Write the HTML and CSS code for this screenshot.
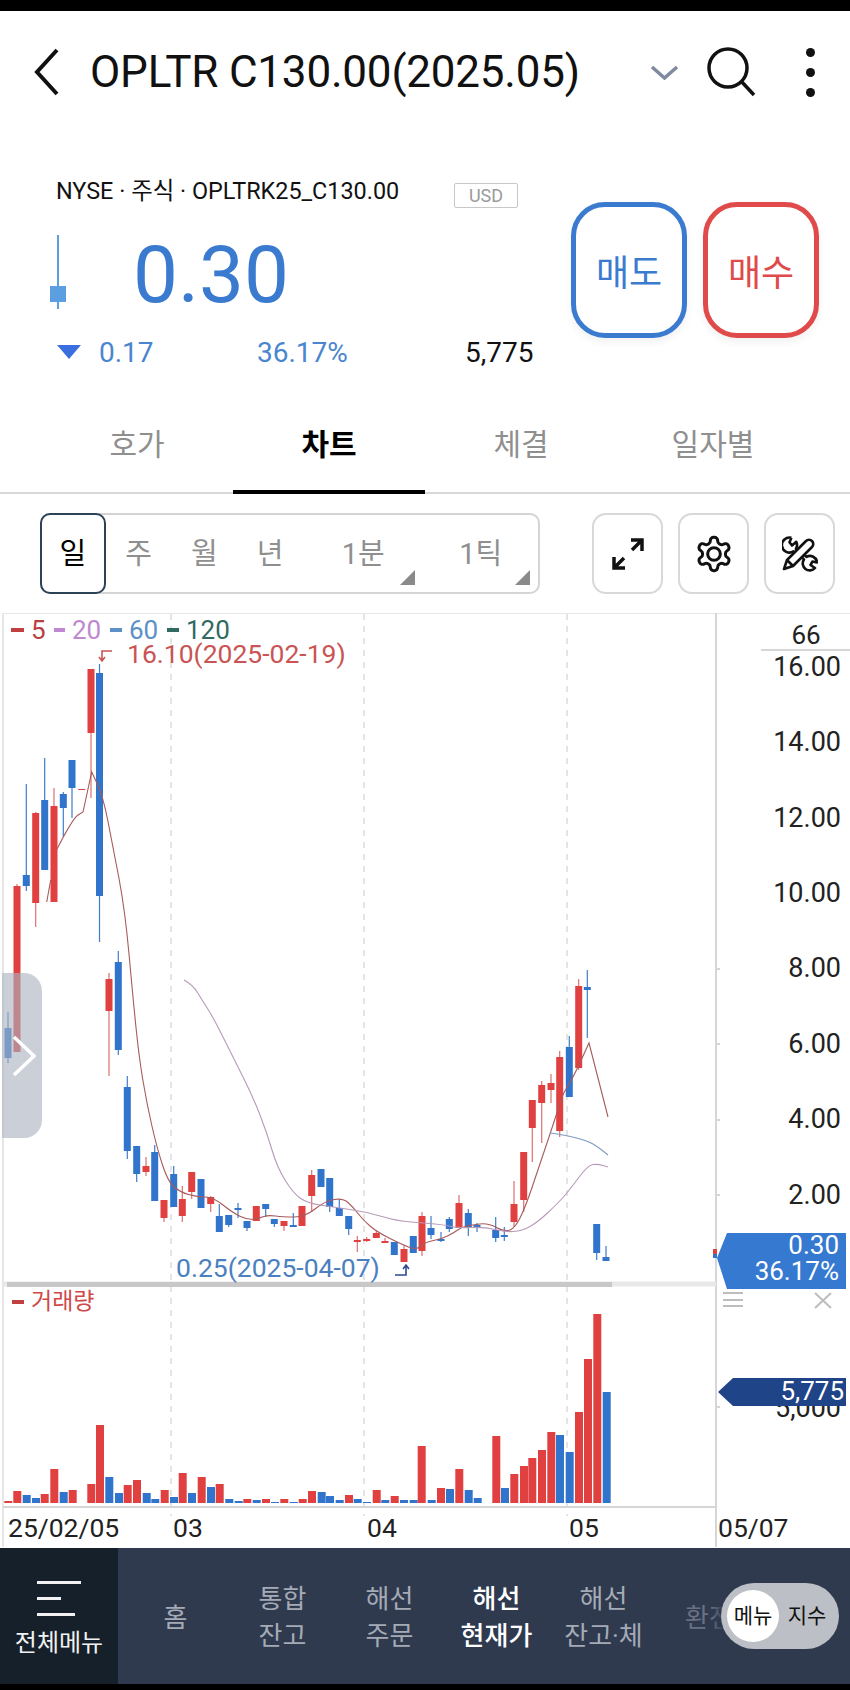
FILE: index.html
```html
<!DOCTYPE html>
<html lang="ko">
<head>
  <meta charset="UTF-8">
  <title>OPLTR C130.00(2025.05)</title>
  <link rel="stylesheet" href="styles.css">
</head>
<body>

  <div class="status-bar"></div>

  <header class="top-bar">
    <svg class="icon-back" width="26" height="48" viewBox="0 0 26 48"><path d="M23 2 L3 24 L23 46"/></svg>
    <h1 class="symbol">OPLTR C130.00(2025.05)</h1>
    <svg class="icon-down" width="29" height="15" viewBox="0 0 29 15"><path d="M2 2 L14.500 13 L27 2"/></svg>
    <svg class="icon-search" width="50" height="50" viewBox="0 0 50 50"><circle cx="21" cy="21" r="19"/><path d="M34 34 L47 48"/></svg>
    <div class="icon-more"><span></span><span></span><span></span></div>
  </header>

  <section class="quote">
    <div class="quote-left">
      <div class="quote-meta">
        <span class="market">NYSE · 주식 · OPLTRK25_C130.00</span>
        <span class="currency">USD</span>
      </div>
      <div class="quote-price">
        <svg class="mini-candle" width="16" height="74" viewBox="0 0 16 74"><rect x="7" y="0" width="2" height="74"/><rect x="0" y="51" width="16" height="16"/></svg>
        <span class="price">0.30</span>
      </div>
      <div class="quote-change">
        <span class="chg-col chg-diff"><i class="tri-down"></i>0.17</span>
        <span class="chg-col chg-rate">36.17%</span>
        <span class="chg-vol">5,775</span>
      </div>
    </div>
    <div class="quote-actions">
      <button class="order-btn sell">매도</button>
      <button class="order-btn buy">매수</button>
    </div>
  </section>

  <nav class="tabs">
    <div class="tab">호가</div>
    <div class="tab active">차트</div>
    <div class="tab">체결</div>
    <div class="tab">일자별</div>
  </nav>

  <div class="toolbar">
    <div class="periods">
      <div class="period selected">일</div>
      <div class="period">주</div>
      <div class="period">월</div>
      <div class="period">년</div>
      <div class="period minute">1분</div>
      <div class="period tick">1틱</div>
    </div>
    <div class="tools">
      <div class="tool-btn">
        <svg width="34" height="34" viewBox="0 0 34 34"><path d="M3 31 L13 21 M3 20 V31 H14 M21 13 L31 3 M20 3 H31 V14"/></svg>
      </div>
      <div class="tool-btn">
        <svg width="40" height="40" viewBox="0 0 24 24" class="thin"><path d="M12.220 2h-.44a2 2 0 0 0-2 2v.18a2 2 0 0 1-1 1.730l-.43.25a2 2 0 0 1-2 0l-.15-.08a2 2 0 0 0-2.730.73l-.22.38a2 2 0 0 0 .73 2.730l.15.1a2 2 0 0 1 1 1.720v.51a2 2 0 0 1-1 1.740l-.15.09a2 2 0 0 0-.73 2.730l.22.38a2 2 0 0 0 2.730.73l.15-.08a2 2 0 0 1 2 0l.43.25a2 2 0 0 1 1 1.730V20a2 2 0 0 0 2 2h.44a2 2 0 0 0 2-2v-.18a2 2 0 0 1 1-1.730l.43-.25a2 2 0 0 1 2 0l.15.08a2 2 0 0 0 2.730-.73l.22-.39a2 2 0 0 0-.73-2.730l-.15-.08a2 2 0 0 1-1-1.740v-.5a2 2 0 0 1 1-1.740l.15-.09a2 2 0 0 0 .73-2.730l-.22-.38a2 2 0 0 0-2.730-.73l-.15.08a2 2 0 0 1-2 0l-.43-.25a2 2 0 0 1-1-1.730V4a2 2 0 0 0-2-2z"/><circle cx="12" cy="12" r="3.800"/></svg>
      </div>
      <div class="tool-btn">
        <svg width="36" height="36" viewBox="0 0 36 36" class="tool-cross">
          <path d="M2 33 L5 24 L24 5 A4.200 4.200 0 0 1 30 11 L11 30 Z M5 24 L11 30"/>
          <path d="M9.400 1.800 L7.500 6.300 L10 9.500 L14.300 5.800 A7.500 7.500 0 0 1 13.900 12.900 L15 14 M9.400 1.800 A7.500 7.500 0 1 0 11.400 15.400 L12.500 16.500"/>
          <path d="M22.250 18.750 L24.450 20.950 A7 7 0 0 1 35 26.400 L30.500 25.500 L28.500 29 L33 32 A7 7 0 0 1 21.950 23.450 L19.750 21.250"/>
        </svg>
      </div>
    </div>
  </div>

  <div class="chart">
    <svg class="chart-svg" width="850" height="935" viewBox="0 613 850 935">
      <g id="grid" class="grid">
        <path d="M171 614 V1516 M364 614 V1516 M567 614 V1516"/>
      </g>
      <path class="frame-light" d="M3 613 H850 M3 613 V1547"/>
      <path class="frame" d="M716 613 V1547 M3 1507 H716 M761 650 H850"/>
      <path class="frame-dim" d="M3 1284 H716"/>
      <rect class="scroll-thumb" x="7" y="1282" width="605" height="5"/>

      <!-- filled from script.js -->
      <g id="volumes"></g>
      <g id="candles"></g>
      <g id="lines"></g>

      <rect class="up" x="713" y="1249" width="4" height="5"/>
      <rect class="down" x="713" y="1254" width="4" height="4"/>

      <!-- legend -->
      <rect class="ma5-fill" x="11" y="628" width="13" height="4"/>
      <text class="ma-label ma5" x="31" y="639">5</text>
      <rect class="ma20-fill" x="54" y="628" width="11" height="4"/>
      <text class="ma-label ma20" x="72" y="639">20</text>
      <rect class="ma60-fill" x="110" y="628" width="12" height="4"/>
      <text class="ma-label ma60" x="129" y="639">60</text>
      <rect class="ma120-fill" x="167" y="628" width="12" height="4"/>
      <text class="ma-label ma120" x="186" y="639">120</text>

      <text class="ma-label hi" x="127" y="663">16.10(2025-02-19)</text>
      <path class="hi-arrow" d="M112 651 H102 V660 M99 657 L102 661 L105 657"/>
      <text class="ma-label lo" x="176" y="1277">0.25(2025-04-07)</text>
      <path class="lo-arrow" d="M395 1275 H406 V1266 M403 1269 L406 1265 L409 1269"/>

      <rect class="ma5-fill" x="12" y="1300" width="12" height="4"/>
      <text class="vol-label" x="31" y="1309">거래량</text>

      <!-- price axis -->
      <text class="axis-label center" x="806" y="644">66</text>
      <g class="axis-label end">
        <text x="841" y="676">16.00</text>
        <text x="841" y="751">14.00</text>
        <text x="841" y="827">12.00</text>
        <text x="841" y="902">10.00</text>
        <text x="841" y="977">8.00</text>
        <text x="841" y="1053">6.00</text>
        <text x="841" y="1128">4.00</text>
        <text x="841" y="1204">2.00</text>
        <text x="841" y="1417">5,000</text>
      </g>
      <path class="frame" d="M716 969 H720 M716 1044 H720 M716 1120 H720 M716 1195 H720 M716 1407 H720"/>

      <!-- date axis -->
      <g class="date-label">
        <text x="8" y="1537">25/02/05</text>
        <text x="173" y="1537">03</text>
        <text x="367" y="1537">04</text>
        <text x="569" y="1537">05</text>
        <text x="718" y="1537">05/07</text>
      </g>

      <!-- current price and volume tags -->
      <polygon class="tag-price" points="727,1233 846,1233 846,1289 727,1289 717,1258"/>
      <text class="tag-text" x="839" y="1254">0.30</text>
      <text class="tag-text" x="839" y="1280">36.17%</text>
      <polygon class="tag-vol" points="733,1378 846,1378 846,1406 733,1406 718,1392"/>
      <text class="tag-text" x="844" y="1400">5,775</text>

      <path class="pane-icon" d="M723 1293 H743 M723 1300 H743 M723 1306 H743 M815 1293 L831 1308 M831 1293 L815 1308"/>
    </svg>

    <div class="side-handle">
      <svg width="24" height="42" viewBox="0 0 24 42"><path d="M2 2 L22 21 L2 40"/></svg>
    </div>
  </div>

  <footer class="bottom-nav">
    <div class="nav-all">
      <div class="burger"><span></span><span></span><span></span></div>
      <div class="nav-all-label">전체메뉴</div>
    </div>
    <div class="nav-item">홈</div>
    <div class="nav-item">통합<br>잔고</div>
    <div class="nav-item">해선<br>주문</div>
    <div class="nav-item current">해선<br>현재가</div>
    <div class="nav-item">해선<br>잔고·체</div>
    <div class="nav-item faded">환전</div>
    <div class="mode-switch">
      <span class="mode on">메뉴</span>
      <span class="mode">지수</span>
    </div>
  </footer>
  <div class="gesture-bar"></div>

  <script src="script.js"></script>
</body>
</html>
```

FILE: styles.css
```css
* {
  box-sizing: border-box;
}
body {
  margin: 0;
  width: 850px;
  background: #fff;
  color: #111;
  font-family: Roboto, 'Noto Sans CJK KR', sans-serif;
}
.status-bar {
  height: 11px;
  background: #000;
}

/* top bar */
.top-bar {
  display: flex;
  align-items: center;
  height: 122px;
  padding-left: 34px;
}
.top-bar svg {
  fill: none;
  flex: none;
}
.icon-back path {
  stroke: #111;
  stroke-width: 4;
}
.symbol {
  width: 560px;
  margin: 0 0 0 30px;
  font-size: 44px;
  font-weight: 400;
  letter-spacing: -0.2px;
  white-space: nowrap;
}
.icon-down path {
  stroke: #7f8a9e;
  stroke-width: 3.5;
}
.icon-search {
  margin-left: 28px;
}
.icon-search circle,
.icon-search path {
  stroke: #111;
  stroke-width: 3.5;
}
.icon-more {
  display: flex;
  flex-direction: column;
  gap: 11px;
  margin-left: 49px;
}
.icon-more span {
  width: 9px;
  height: 9px;
  border-radius: 50%;
  background: #111;
}

/* quote */
.quote {
  display: flex;
  height: 272px;
  padding: 49px 0 0 50px;
}
.quote-left {
  width: 521px;
}
.quote-meta {
  display: flex;
  align-items: flex-start;
  height: 27px;
  padding-left: 6px;
}
.market {
  width: 398px;
  font-size: 23.4px;
  line-height: 18px;
  white-space: nowrap;
}
.currency {
  width: 64px;
  height: 25px;
  margin-top: 1px;
  border: 1px solid #c8c8c8;
  border-radius: 2px;
  color: #9a9a9a;
  font-size: 18px;
  line-height: 23px;
  text-align: center;
}
.quote-price {
  display: flex;
  align-items: center;
  height: 74px;
  margin-top: 26px;
}
.mini-candle {
  fill: #5b9fe0;
}
.price {
  margin-left: 67px;
  padding-top: 6px;
  color: #3a7bd0;
  font-size: 80px;
  line-height: 74px;
}
.quote-change {
  display: flex;
  align-items: center;
  height: 30px;
  margin-top: 28px;
  padding-left: 7px;
  font-size: 28px;
}
.chg-col {
  color: #4a86cf;
}
.chg-diff {
  display: flex;
  align-items: center;
  width: 200px;
}
.chg-rate {
  width: 208px;
}
.tri-down {
  width: 0;
  height: 0;
  margin-right: 18px;
  border-top: 14px solid #3b6fe0;
  border-left: 12px solid transparent;
  border-right: 12px solid transparent;
}
.quote-actions {
  display: flex;
  gap: 16px;
  margin-top: 20px;
}
.order-btn {
  width: 116px;
  height: 136px;
  padding: 0;
  background: #fff;
  border: 5px solid;
  border-radius: 34px;
  font-family: inherit;
  font-size: 36px;
  box-shadow: 0 4px 8px rgba(0,0,0,0.06);
}
.sell {
  border-color: #3a7bd0;
  color: #3a7bd0;
}
.buy {
  border-color: #e04a4a;
  color: #e04a4a;
}

/* tabs */
.tabs {
  display: flex;
  height: 89px;
  padding: 0 41px;
  border-bottom: 2px solid #d8d8d8;
}
.tab {
  flex: 1;
  height: 89px;
  padding-top: 20px;
  border-bottom: 4px solid transparent;
  color: #8f8f8f;
  font-size: 30px;
  line-height: 40px;
  text-align: center;
}
.tab.active {
  border-bottom-color: #000;
  color: #000;
  font-weight: 700;
}

/* period toolbar */
.toolbar {
  display: flex;
  justify-content: space-between;
  height: 81px;
  margin-top: 19px;
  padding: 0 15px 0 40px;
}
.periods {
  display: flex;
  width: 500px;
  border: 2px solid #d4d4d4;
  border-radius: 10px;
}
.period {
  position: relative;
  width: 66px;
  color: #8f8f8f;
  font-size: 29px;
  line-height: 78px;
  text-align: center;
}
.period.selected {
  width: 66px;
  margin: -2px 0 -2px -2px;
  border: 2px solid #2b4257;
  border-radius: 10px;
  line-height: 78px;
  color: #000;
}
.period.minute {
  width: 121px;
}
.period.tick {
  width: 115px;
}
.period.minute::after,
.period.tick::after {
  content: "";
  position: absolute;
  right: 8px;
  bottom: 7px;
  border-bottom: 15px solid #8a8a8a;
  border-left: 15px solid transparent;
}
.tools {
  display: flex;
  gap: 15px;
}
.tool-btn {
  display: flex;
  align-items: center;
  justify-content: center;
  width: 71px;
  border: 2px solid #d8d8d8;
  border-radius: 14px;
}
.tool-btn svg {
  fill: none;
  stroke: #111;
  stroke-width: 3.5;
}
.tool-btn svg.thin {
  stroke-width: 1.8;
}
.tool-btn svg.tool-cross {
  stroke-width: 2.6;
  stroke-linejoin: round;
}

/* chart */
.chart {
  position: relative;
  height: 935px;
  margin-top: 19px;
}
.chart-svg {
  display: block;
}
.grid path {
  fill: none;
  stroke: #dcdcdc;
  stroke-dasharray: 6 6;
  stroke-width: 1.5;
}
.frame {
  fill: none;
  stroke: #d6d6d6;
  stroke-width: 2;
}
.frame-light {
  fill: none;
  stroke: #e6e6e6;
  stroke-width: 2;
}
.frame-dim {
  fill: none;
  stroke: #e8e8e8;
  stroke-width: 5;
}
.scroll-thumb {
  fill: #c8c8c8;
}
.up {
  fill: #e04040;
}
.down {
  fill: #3174cc;
}
.wick-up {
  stroke: #dc7070;
  stroke-width: 1.2;
}
.wick-down {
  stroke: #3f7dc8;
  stroke-width: 1.2;
}
.ma-line {
  fill: none;
  stroke-width: 1.1;
}
.ma-line.l5 {
  stroke: #a85a5a;
}
.ma-line.l20 {
  stroke: #b79ab8;
}
.ma-line.l60 {
  stroke: #7f9cc0;
}
.ma5-fill {
  fill: #c04040;
}
.ma20-fill {
  fill: #c088d0;
}
.ma60-fill {
  fill: #5b90c8;
}
.ma120-fill {
  fill: #2f6b60;
}
.ma-label,
.tag-text {
  font-size: 26px;
}
.ma5 {
  fill: #b84040;
}
.ma20 {
  fill: #c088d0;
}
.ma60 {
  fill: #5b90c8;
}
.ma120 {
  fill: #2f6b60;
}
.ma-label.hi {
  fill: #c95454;
  font-size: 26.5px;
}
.ma-label.lo {
  fill: #4a80c0;
  font-size: 26.5px;
}
.hi-arrow,
.lo-arrow {
  fill: none;
  stroke-width: 1.6;
}
.hi-arrow {
  stroke: #c95454;
}
.lo-arrow {
  stroke: #2b4a90;
}
.vol-label {
  fill: #d04848;
  font-size: 23px;
}
.axis-label {
  fill: #222;
  font-size: 27px;
}
.date-label {
  fill: #222;
  font-size: 26.5px;
}
.axis-label.end {
  text-anchor: end;
}
.axis-label.center {
  font-size: 26px;
  text-anchor: middle;
}
.tag-price {
  fill: #3579d0;
}
.tag-vol {
  fill: #1f4488;
}
.tag-text {
  fill: #fff;
  text-anchor: end;
}
.pane-icon {
  fill: none;
  stroke: #bdbdbd;
  stroke-width: 2;
}
.side-handle {
  position: absolute;
  left: 2px;
  top: 360px;
  display: flex;
  align-items: center;
  width: 40px;
  height: 165px;
  padding-left: 10px;
  background: rgba(170, 178, 192, 0.62);
  border-radius: 0 18px 18px 0;
}
.side-handle svg {
  fill: none;
  stroke: #fff;
  stroke-width: 3.5;
}

/* bottom nav */
.bottom-nav {
  position: relative;
  display: flex;
  height: 136px;
  background: #2f3a4f;
  overflow: hidden;
}
.nav-all {
  display: flex;
  flex-direction: column;
  flex: none;
  width: 118px;
  margin-right: 4px;
  padding-top: 33px;
  background: #16202a;
  align-items: center;
}
.burger {
  width: 44px;
}
.burger span {
  display: block;
  height: 3px;
  margin-bottom: 13px;
  background: #f2f2f2;
}
.burger span:nth-child(2) {
  width: 24px;
}
.burger span:nth-child(3) {
  width: 38px;
  margin-bottom: 0;
}
.nav-all-label {
  margin-top: 11px;
  color: #f2f2f2;
  font-size: 24px;
  line-height: 32px;
}
.nav-item {
  display: flex;
  align-items: center;
  justify-content: center;
  flex: none;
  width: 107px;
  padding-top: 4px;
  color: #a5abb6;
  font-size: 26px;
  line-height: 37px;
  text-align: center;
}
.nav-item.current {
  color: #fff;
  font-weight: 500;
}
.nav-item.faded {
  position: relative;
  justify-content: flex-start;
  padding-left: 28px;
  color: #697183;
}
.nav-item.faded::after {
  content: "";
  position: absolute;
  left: 54px;
  top: 0;
  width: 14px;
  height: 100%;
  background: linear-gradient(to right, rgba(47,58,79,0), #2f3a4f);
}
.mode-switch {
  position: absolute;
  left: 721px;
  top: 35px;
  display: flex;
  align-items: center;
  width: 118px;
  height: 66px;
  padding-left: 6px;
  background: #bcbfc6;
  border-radius: 33px;
  font-size: 21px;
}
.mode {
  width: 52px;
  color: #111;
  line-height: 52px;
  text-align: center;
}
.mode.on {
  margin-right: 2px;
  background: #fff;
  border-radius: 50%;
}
.gesture-bar {
  height: 6px;
  background: #000;
}
```

FILE: script.js
```js
const SVG_NS = 'http://www.w3.org/2000/svg';

// x, wick top, wick bottom, body top, body bottom, up or down (screen pixels)
const candles = [
  [8, 1012, 1063, 1028, 1058, 'd'], [17, 884, 1052, 886, 1052, 'u'],
  [26.3, 784, 891, 875, 886, 'd'], [35.7, 812, 927, 813, 903, 'u'],
  [44.7, 758, 870, 800, 870, 'd'], [54, 788, 902, 806, 902, 'u'],
  [63.3, 792, 837, 794, 808, 'd'], [72, 760, 818, 760, 788, 'd'],
  [81.7, 789, 790, 789, 790, 'u'], [91, 669, 798, 669, 733, 'u'],
  [99.5, 664, 942, 673, 896, 'd'], [109, 973, 1076, 979, 1011, 'u'],
  [118.3, 951, 1055, 962, 1050, 'd'], [127.3, 1076, 1159, 1087, 1151, 'd'],
  [136.7, 1146, 1182, 1146, 1174, 'd'], [146, 1157, 1176, 1166, 1172, 'u'],
  [154.7, 1145, 1201, 1152, 1201, 'd'], [164, 1200, 1222, 1200, 1218, 'u'],
  [173.7, 1166, 1207, 1174, 1207, 'd'], [182.3, 1186, 1222, 1199, 1216, 'u'],
  [191.7, 1172, 1199, 1172, 1192, 'u'], [201, 1179, 1208, 1179, 1208, 'd'],
  [210.7, 1196, 1212, 1197, 1204, 'u'], [219.3, 1204, 1232, 1216, 1232, 'd'],
  [228.7, 1215, 1227, 1215, 1225, 'd'], [238, 1203, 1218, 1208, 1210, 'd'],
  [247, 1221, 1231, 1221, 1228, 'd'], [256.3, 1206, 1221, 1206, 1221, 'u'],
  [265.7, 1204, 1217, 1204, 1209, 'd'], [274.3, 1219, 1227, 1219, 1224, 'd'],
  [284, 1221, 1231, 1221, 1226, 'u'], [293.3, 1213, 1226, 1225, 1227, 'd'],
  [302, 1206, 1226, 1206, 1226, 'u'], [311.7, 1170, 1212, 1175, 1196, 'u'],
  [321, 1169, 1187, 1169, 1187, 'd'], [329.7, 1178, 1212, 1178, 1207, 'd'],
  [339.3, 1200, 1216, 1208, 1216, 'd'], [348.7, 1216, 1235, 1216, 1229, 'd'],
  [357.3, 1236, 1252, 1240, 1242, 'u'], [366.7, 1237, 1242, 1239, 1241, 'u'],
  [376.3, 1231, 1238, 1233, 1238, 'u'], [385, 1238, 1243, 1241, 1243, 'u'],
  [394.3, 1242, 1255, 1242, 1255, 'd'], [404, 1245, 1262, 1249, 1262, 'u'],
  [413.3, 1236, 1253, 1236, 1253, 'd'], [422, 1212, 1256, 1216, 1251, 'u'],
  [431, 1216, 1239, 1228, 1235, 'd'], [441, 1232, 1242, 1239, 1241, 'd'],
  [449.3, 1217, 1232, 1219, 1229, 'd'], [459, 1195, 1228, 1203, 1228, 'u'],
  [468.3, 1209, 1236, 1213, 1227, 'd'], [477, 1223, 1232, 1225, 1227, 'd'],
  [495.7, 1217, 1242, 1230, 1238, 'd'], [504.3, 1227, 1241, 1235, 1237, 'd'],
  [514, 1181, 1227, 1204, 1222, 'u'], [523.7, 1152, 1212, 1152, 1200, 'u'],
  [532.3, 1100, 1162, 1100, 1128, 'u'], [541.7, 1081, 1143, 1085, 1103, 'u'],
  [551, 1074, 1103, 1083, 1090, 'u'], [559.7, 1051, 1137, 1057, 1131, 'u'],
  [569.3, 1036, 1097, 1047, 1097, 'd'], [578.7, 979, 1070, 986, 1068, 'u'],
  [587.3, 970, 1038, 987, 990, 'd'], [596.7, 1224, 1260, 1224, 1253, 'd'],
  [606, 1246, 1261, 1257, 1261, 'd']
];

// x, bar top, up or down; bars stand on y=1503
const volumes = [
  [8.3, 1501, 'u'], [17.3, 1491, 'u'], [26.7, 1495, 'd'], [36, 1498, 'd'],
  [44.7, 1494, 'u'], [54.3, 1469, 'u'], [63.7, 1492, 'd'], [72.7, 1490, 'u'],
  [91.3, 1484, 'u'], [100, 1425, 'u'], [109.3, 1477, 'd'], [119, 1493, 'd'],
  [127.7, 1485, 'u'], [137, 1480, 'u'], [146.7, 1493, 'd'], [155.3, 1499, 'd'],
  [164.7, 1490, 'u'], [174, 1497, 'd'], [182.7, 1473, 'u'], [192, 1493, 'd'],
  [201.7, 1477, 'u'], [211, 1487, 'd'], [219.7, 1484, 'u'], [229.3, 1499, 'd'],
  [238.7, 1501, 'd'], [247.3, 1499, 'u'], [256.7, 1500, 'd'], [266, 1499, 'u'],
  [275, 1502, 'd'], [284.3, 1499, 'u'], [293.7, 1502, 'd'], [302.7, 1499, 'u'],
  [312, 1491, 'u'], [321.7, 1492, 'd'], [330, 1496, 'd'], [339.7, 1500, 'd'],
  [349, 1495, 'u'], [357.7, 1499, 'd'], [367, 1502, 'd'], [376.7, 1490, 'u'],
  [385.3, 1500, 'd'], [394.7, 1496, 'u'], [404, 1500, 'd'], [413.7, 1500, 'd'],
  [421.7, 1446, 'u'], [431.7, 1500, 'd'], [441, 1488, 'u'], [450, 1489, 'd'],
  [459.3, 1469, 'u'], [468.7, 1490, 'd'], [477.7, 1498, 'd'], [496.3, 1436, 'u'],
  [505, 1488, 'd'], [514.3, 1474, 'u'], [524, 1466, 'u'], [532.3, 1458, 'u'],
  [542, 1450, 'u'], [551.3, 1432, 'u'], [560, 1435, 'd'], [569.7, 1452, 'd'],
  [579, 1412, 'u'], [588, 1359, 'u'], [597.3, 1314, 'u'], [606.7, 1392, 'd']
];

// a point given twice stays a sharp corner, the others get rounded off
const maLines = [
  ['l5', [[46.7, 902], [50.7, 880]]],
  ['l5', [[57, 849], [73, 818], [83, 812], [83, 812], [91.7, 772], [91.7, 772], [103, 796], [113, 847], [125, 910], [133, 998], [139, 1057], [146.7, 1103], [156.7, 1147], [168, 1182], [180, 1192], [197, 1197], [213, 1197], [233, 1213], [248, 1220], [260, 1218], [268, 1215], [283, 1217], [305, 1217], [325, 1201], [343, 1198], [353, 1207], [363, 1220], [377, 1232], [403, 1245], [417, 1250], [425, 1242], [442, 1239], [455, 1232], [462, 1227], [472, 1225], [488, 1223], [505, 1232], [515, 1228], [525, 1208], [538, 1170], [557, 1113], [563, 1093], [573, 1078], [589, 1043], [589, 1043], [608, 1117]]],
  ['l20', [[184, 980], [193, 985], [202, 1000], [213, 1017], [233, 1057], [253, 1097], [267, 1133], [277, 1167], [293, 1193], [307, 1203], [333, 1207], [367, 1212], [397, 1221], [425, 1223], [445, 1225], [458, 1228], [485, 1227], [505, 1232], [522, 1231], [538, 1222], [558, 1203], [568, 1192], [588, 1165], [598, 1164], [608, 1167]]],
  ['l60', [[550, 1133], [565, 1135], [588, 1141], [598, 1147], [608, 1155]]]
];

function addShape(parent, tag, attrs) {
  const el = document.createElementNS(SVG_NS, tag);
  Object.keys(attrs).forEach(key => el.setAttribute(key, attrs[key]));
  parent.appendChild(el);
}

function smoothPath(points) {
  let d = `M${points[0][0]} ${points[0][1]}`;
  for (let i = 1; i < points.length - 1; i++) {
    const midX = (points[i][0] + points[i + 1][0]) / 2;
    const midY = (points[i][1] + points[i + 1][1]) / 2;
    d += ` Q${points[i][0]} ${points[i][1]} ${midX} ${midY}`;
  }
  const last = points[points.length - 1];
  return d + ` L${last[0]} ${last[1]}`;
}

const candleGroup = document.getElementById('candles');
candles.forEach(([x, wickTop, wickBottom, top, bottom, dir]) => {
  addShape(candleGroup, 'line', {
    x1: x, x2: x, y1: wickTop, y2: wickBottom,
    class: dir === 'u' ? 'wick-up' : 'wick-down'
  });
  addShape(candleGroup, 'rect', {
    x: x - 3.5, y: top, width: 7, height: bottom - top,
    class: dir === 'u' ? 'up' : 'down'
  });
});

const volumeGroup = document.getElementById('volumes');
volumes.forEach(([x, top, dir]) => {
  addShape(volumeGroup, 'rect', {
    x: x - 4, y: top, width: 8, height: 1503 - top,
    class: dir === 'u' ? 'up' : 'down'
  });
});

const lineGroup = document.getElementById('lines');
maLines.forEach(([name, points]) => {
  addShape(lineGroup, 'path', { d: smoothPath(points), class: 'ma-line ' + name });
});
```
